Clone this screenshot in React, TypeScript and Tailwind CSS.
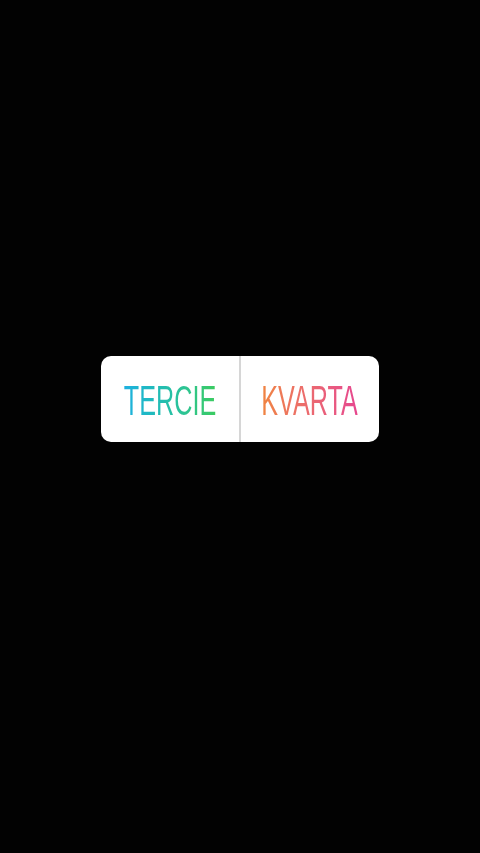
export default function App() {
  return (
    <div className="flex h-[853px] w-full flex-col items-center bg-[#020202] pt-[356px]">
      {/* Poll sticker */}
      <div className="flex h-[86px] w-[278px] overflow-hidden rounded-[10px] bg-white">
        <div className="flex w-[138px] shrink-0 items-center justify-center">
          <span className="inline-block shrink-0 scale-x-[0.6] bg-gradient-to-r from-[#1eb0e0] to-[#3ccb5e] bg-clip-text pt-[3px] font-['Liberation_Sans',Arial,sans-serif] text-[42px] leading-none text-transparent">
            TERCIE
          </span>
        </div>
        <div className="w-[2px] shrink-0 bg-[#d6d6d6]" />
        <div className="flex w-[138px] shrink-0 items-center justify-center">
          <span className="inline-block shrink-0 scale-x-[0.6] bg-gradient-to-r from-[#f0843e] to-[#e6468f] bg-clip-text pt-[3px] font-['Liberation_Sans',Arial,sans-serif] text-[42px] leading-none text-transparent">
            KVARTA
          </span>
        </div>
      </div>
    </div>
  );
}
